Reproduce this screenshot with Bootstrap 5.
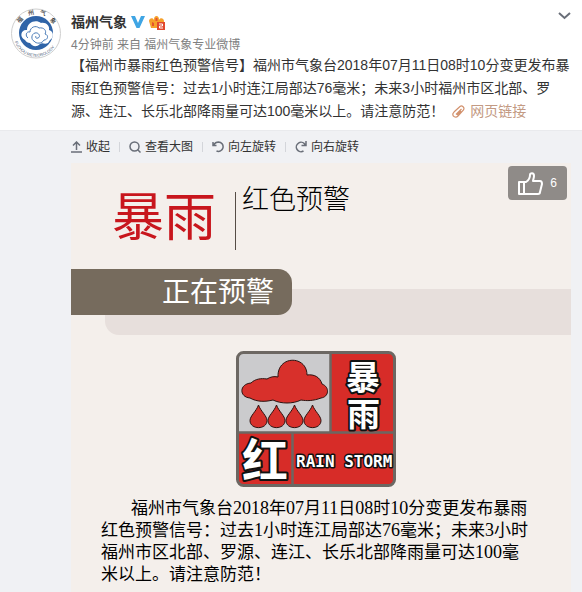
<!DOCTYPE html>
<html lang="zh-CN">
<head>
<meta charset="utf-8">
<meta name="viewport" content="width=device-width, initial-scale=1">
<title>福州气象</title>
<link href="https://cdn.jsdelivr.net/npm/bootstrap@5.3.0/dist/css/bootstrap.min.css" rel="stylesheet">
<style>
body { font-family: "Liberation Sans", "Noto Sans CJK SC", sans-serif; font-size: 14px; color: #333; background: #f0f1f4; }
svg { display: block; flex: none; }
a { text-decoration: none; }
.post-head { padding: 8px 11px 7px 10px; gap: 9px; }
.post-name { font-size: 14px; line-height: 20px; color: #333; }
.post-meta { font-size: 12px; line-height: 18px; padding-top: 4px; }
.post-meta, .post-meta a { color: #808080; }
.post-text { line-height: 23px; }
.post-text a { color: #c39a83; }
.post-text svg { display: inline-block; margin-right: 5px; vertical-align: -2px; }
.tools { padding: 7px 11px 7px 71px; border-top: 1px solid #e9eaed; line-height: 18px; }
.tool { font-size: 12px; line-height: 18px; gap: 4px; color: #333; }
.tool svg { color: #696e78; }
.tool-sep { width: 1px; height: 10px; margin: 0 9px; background: #d3d5da; }
.photo-wrap { padding: 0 11px 0 71px; }
.notice { background: #f4efeb; min-height: 429px; font-family: "Noto Sans CJK SC", sans-serif; color: #000; }
.like { top: 3px; right: 4px; width: 59px; height: 34px; border-radius: 4px; background: #8f8b88; color: #fff; font: 12px/16px "Liberation Sans", sans-serif; gap: 7px; }
.notice-head { padding: 18px 0 0 41px; height: 106px; }
.storm { font-size: 52px; line-height: 66px; color: #c8161d; width: 123px; font-weight: 400; }
.level { font-size: 27px; line-height: 34px; padding-left: 6px; font-weight: 300; }
.rule { width: 1px; height: 58px; margin-top: 11px; background: #554d46; }
.band { display: grid; }
.band > * { grid-area: 1 / 1; height: 46px; }
.band-back { margin: 20px 0 0 34px; background: #e7dfdc; border-radius: 0 0 0 14px; }
.band-front { width: 221px; background: #766b5d; color: #fff; border-radius: 0 14px 14px 0; padding-right: 18px; font-size: 28px; line-height: 43px; font-weight: 400; z-index: 1; }
.sign { padding: 15px 0 0 164px; }
.detail { padding: 8px 0 0 30px; font-size: 17px; line-height: 22px; }
.indent { padding-left: 30px; }
.digits { font-family: "Liberation Serif", serif; font-size: 18px; line-height: 1; }
.mid { font-family: "Noto Sans CJK TC", sans-serif; }
.sign-text { font-family: "Noto Sans CJK SC", sans-serif; font-weight: 700; fill: #fff; stroke: #111; stroke-width: 4px; paint-order: stroke; stroke-linejoin: round; }
.sign-latin { font-family: "DejaVu Sans Mono", monospace; stroke-width: 3px; }
.ring-text { font-family: "Noto Sans CJK SC", sans-serif; font-size: 6px; font-weight: 500; fill: #333; text-anchor: middle; }
.ring-latin { font-family: "Liberation Sans", sans-serif; font-size: 4px; fill: #4a5a78; }
</style>
<script src="https://cdn.jsdelivr.net/npm/bootstrap@5.3.0/dist/js/bootstrap.bundle.min.js"></script>
</head>
<body>
<article>
  <div class="post-head bg-white d-flex align-items-start">
    <a href="#" aria-label="福州气象">
      <svg class="overflow-visible" width="52" height="52" viewBox="0 0 52 52">
        <defs><path id="ringLow" d="M4 31A22.500 22.500 0 0 0 48 31"/></defs>
        <circle cx="26" cy="25.500" r="24.500" fill="#fff" stroke="#cfcfcf"/>
        <circle cx="26" cy="25" r="17" fill="#2f64a8"/>
        <path d="M15 32c-6-3-4-11 2-10 0-8 9-11 14-7 5-1 9 3 8 7 5 1 5 8 1 10l-2 3c-4 2-5-1-8 1-4 4-8 2-10-1-2 0-4-1-5-3z" fill="#fff"/>
        <path d="M18 30c-3-2-2-7 2-6 0-5 6-7 9-4 5-1 8 3 6 6 4 1 3 6-1 6-2 4-8 4-10 1-3-1-3-7 1-8 4-1 6 4 3 5-2 1-3-1-2-2" fill="none" stroke="#4a7cb8"/>
        <text class="ring-text" x="10" y="14" transform="rotate(-45 10 12)">福</text>
        <text class="ring-text" x="21" y="7" transform="rotate(-12 21 5)">州</text>
        <text class="ring-text" x="33" y="7" transform="rotate(15 33 5)">气</text>
        <text class="ring-text" x="43" y="15" transform="rotate(48 43 13)">象</text>
        <text class="ring-latin"><textPath href="#ringLow" startOffset="3">FUZHOU METEOROLOGY</textPath></text>
      </svg>
    </a>
    <div class="flex-grow-1 pt-1">
      <div class="d-flex align-items-center">
        <a href="#" class="post-name fw-bold me-1">福州气象</a>
        <svg width="14" height="14" viewBox="0 0 14 14" aria-hidden="true"><path d="M0 1h4l3 7L10 1h4L8.500 13h-3z" fill="#3fa5e4"/></svg>
        <svg class="ms-1" width="16" height="15" viewBox="0 0 16 15" aria-hidden="true"><path d="M0 6c0-3 4-4 5-1 0-3 1-4 2.500-4S10 2 10 5c1-3 5-2 5 1l-1 7H2z" fill="#f6a02a"/><path d="M6.500 3h2v3h-2zM3 7l2 1v3H3z" fill="#e5532c"/><path d="M8 7h8v8H8z" fill="#e2482c"/><path d="M10 9h3.500v2H10.500v2H14" fill="none" stroke="#fff"/></svg>
        <button type="button" class="btn p-0 border-0 ms-auto align-self-start lh-1" aria-label="更多"><svg width="13" height="8" viewBox="0 0 13 8"><path d="M1 1l5.500 5L12 1" fill="none" stroke="#696e78" stroke-width="2"/></svg></button>
      </div>
      <div class="post-meta"><a href="#">4分钟前</a> 来自 <a href="#">福州气象专业微博</a></div>
      <p class="post-text mb-0 text-nowrap">【福州市暴雨红色预警信号】福州市气象台2018年07月11日08时10分变更发布暴<br>雨红色预警信号：过去1小时连江局部达76毫米；未来3小时福州市区北部、罗<br>源、连江、长乐北部降雨量可达100毫米以上。请注意防范！ <a href="#" class="ms-1"><svg width="13" height="13" viewBox="0 0 13 13" fill="none" stroke="#d2916d" stroke-width="1.200"><path d="M4 9.500L9.500 4M2.500 6.500L8 1.500c2-1.500 5 1 3.500 3.500L6 11c-2 2-6 1-5-2.500zM9 6l-4 4"/></svg>网页链接</a></p>
    </div>
  </div>

  <div class="tools d-flex align-items-center">
    <button type="button" class="tool btn p-0 border-0 d-flex align-items-center"><svg width="11" height="12" viewBox="0 0 11 12" fill="none" stroke="currentColor" stroke-width="1.500"><path d="M0 11h11M5.500 9V1M2 4.500L5.500 1 9 4.500"/></svg>收起</button>
    <span class="tool-sep"></span>
    <button type="button" class="tool btn p-0 border-0 d-flex align-items-center"><svg width="12" height="12" viewBox="0 0 12 12" fill="none" stroke="currentColor" stroke-width="1.500"><circle cx="5.500" cy="5.500" r="4.500"/><path d="M8.500 8.500l3 3"/></svg>查看大图</button>
    <span class="tool-sep"></span>
    <button type="button" class="tool btn p-0 border-0 d-flex align-items-center"><svg width="12" height="12" viewBox="0 0 12 12" fill="none" stroke="currentColor" stroke-width="1.500"><path d="M1 1v3.500h3.500M1.500 4C3 1.500 5 1 6.500 1a4.700 4.700 0 1 1-2 9"/></svg>向左旋转</button>
    <span class="tool-sep"></span>
    <button type="button" class="tool btn p-0 border-0 d-flex align-items-center"><svg width="12" height="12" viewBox="0 0 12 12" fill="none" stroke="currentColor" stroke-width="1.500"><path d="M8.500 10a4.700 4.700 0 1 1 1.500-6.500M11 0v4.500H6.500"/></svg>向右旋转</button>
  </div>

  <div class="photo-wrap">
    <section class="notice position-relative">
      <button type="button" class="like btn border-0 p-0 position-absolute d-flex align-items-center justify-content-center" aria-label="赞 6"><svg width="25" height="23" viewBox="0 0 25 23" fill="none" stroke="#fff" stroke-width="2" stroke-linejoin="round"><path d="M1 10h5v12H1zM6 10h2c3-2 4-4 4-7 0-2 4-3 4 1 0 2-1 4-1 5h7c2 0 2 2 2 3l-2 8c0 1-1 2-2 2H6"/></svg>6</button>
      <div class="notice-head d-flex align-items-start">
        <div class="storm text-nowrap">暴雨</div>
        <div class="rule"></div>
        <div class="level text-nowrap">红色预警</div>
      </div>
      <div class="band">
        <div class="band-back"></div>
        <div class="band-front text-end">正在预警</div>
      </div>
      <div class="sign">
        <svg class="overflow-visible" width="162" height="138" viewBox="0 0 162 138" role="img" aria-label="暴雨红色预警">
          <rect x="2.500" y="2.500" width="157" height="133" rx="6" fill="#d72c28"/>
          <path d="M3 82V8a5 5 0 0 1 5-5h87v79z" fill="#cbcbcd"/>
          <path d="M95.500 3v79M3 82.500h156M57.500 82v54" fill="none" stroke="#6c6762" stroke-width="2.500"/>
          <rect x="2.500" y="2.500" width="157" height="133" rx="6" fill="none" stroke="#6c6762" stroke-width="3"/>
          <g fill="#d8302b" stroke="#2b1210">
            <path d="M15 48C4 47 4 34 16 33c4-4 10-5 16-4 3-2 7-3 11-2-1-22 29-22 29-2 7-1 13 2 15 9 8 3 7 13-1 14-8 3-14 3-20 2-8 4-20 4-28 0-8 2-16 2-23-2z"/>
            <path id="drop" d="M23.500 55c2 6 8.500 11 8.500 15.500 0 9.500-17 9.500-17 0C15 66 21.500 61 23.500 55z"/>
            <use href="#drop" x="18"/><use href="#drop" x="36"/><use href="#drop" x="54"/>
          </g>
          <text class="sign-text" x="111" y="40" font-size="34">暴</text>
          <text class="sign-text" x="112" y="76" font-size="33">雨</text>
          <text class="sign-text" x="7" y="127" font-size="46">红</text>
          <text class="sign-text sign-latin" x="61" y="117" font-size="16">RAIN STORM</text>
        </svg>
      </div>
      <p class="detail mb-0 text-nowrap"><span class="indent">福州市气象台</span><span class="digits">2018</span>年<span class="digits">07</span>月<span class="digits">11</span>日<span class="digits">08</span>时<span class="digits">10</span>分变更发布暴雨<br>红色预警信号<span class="mid">：</span>过去<span class="digits">1</span>小时连江局部达<span class="digits">76</span>毫米<span class="mid">；</span>未来<span class="digits">3</span>小时<br>福州市区北部、罗源、连江、长乐北部降雨量可达<span class="digits">100</span>毫<br>米以上。请注意防范！</p>
    </section>
  </div>
</article>
</body>
</html>
